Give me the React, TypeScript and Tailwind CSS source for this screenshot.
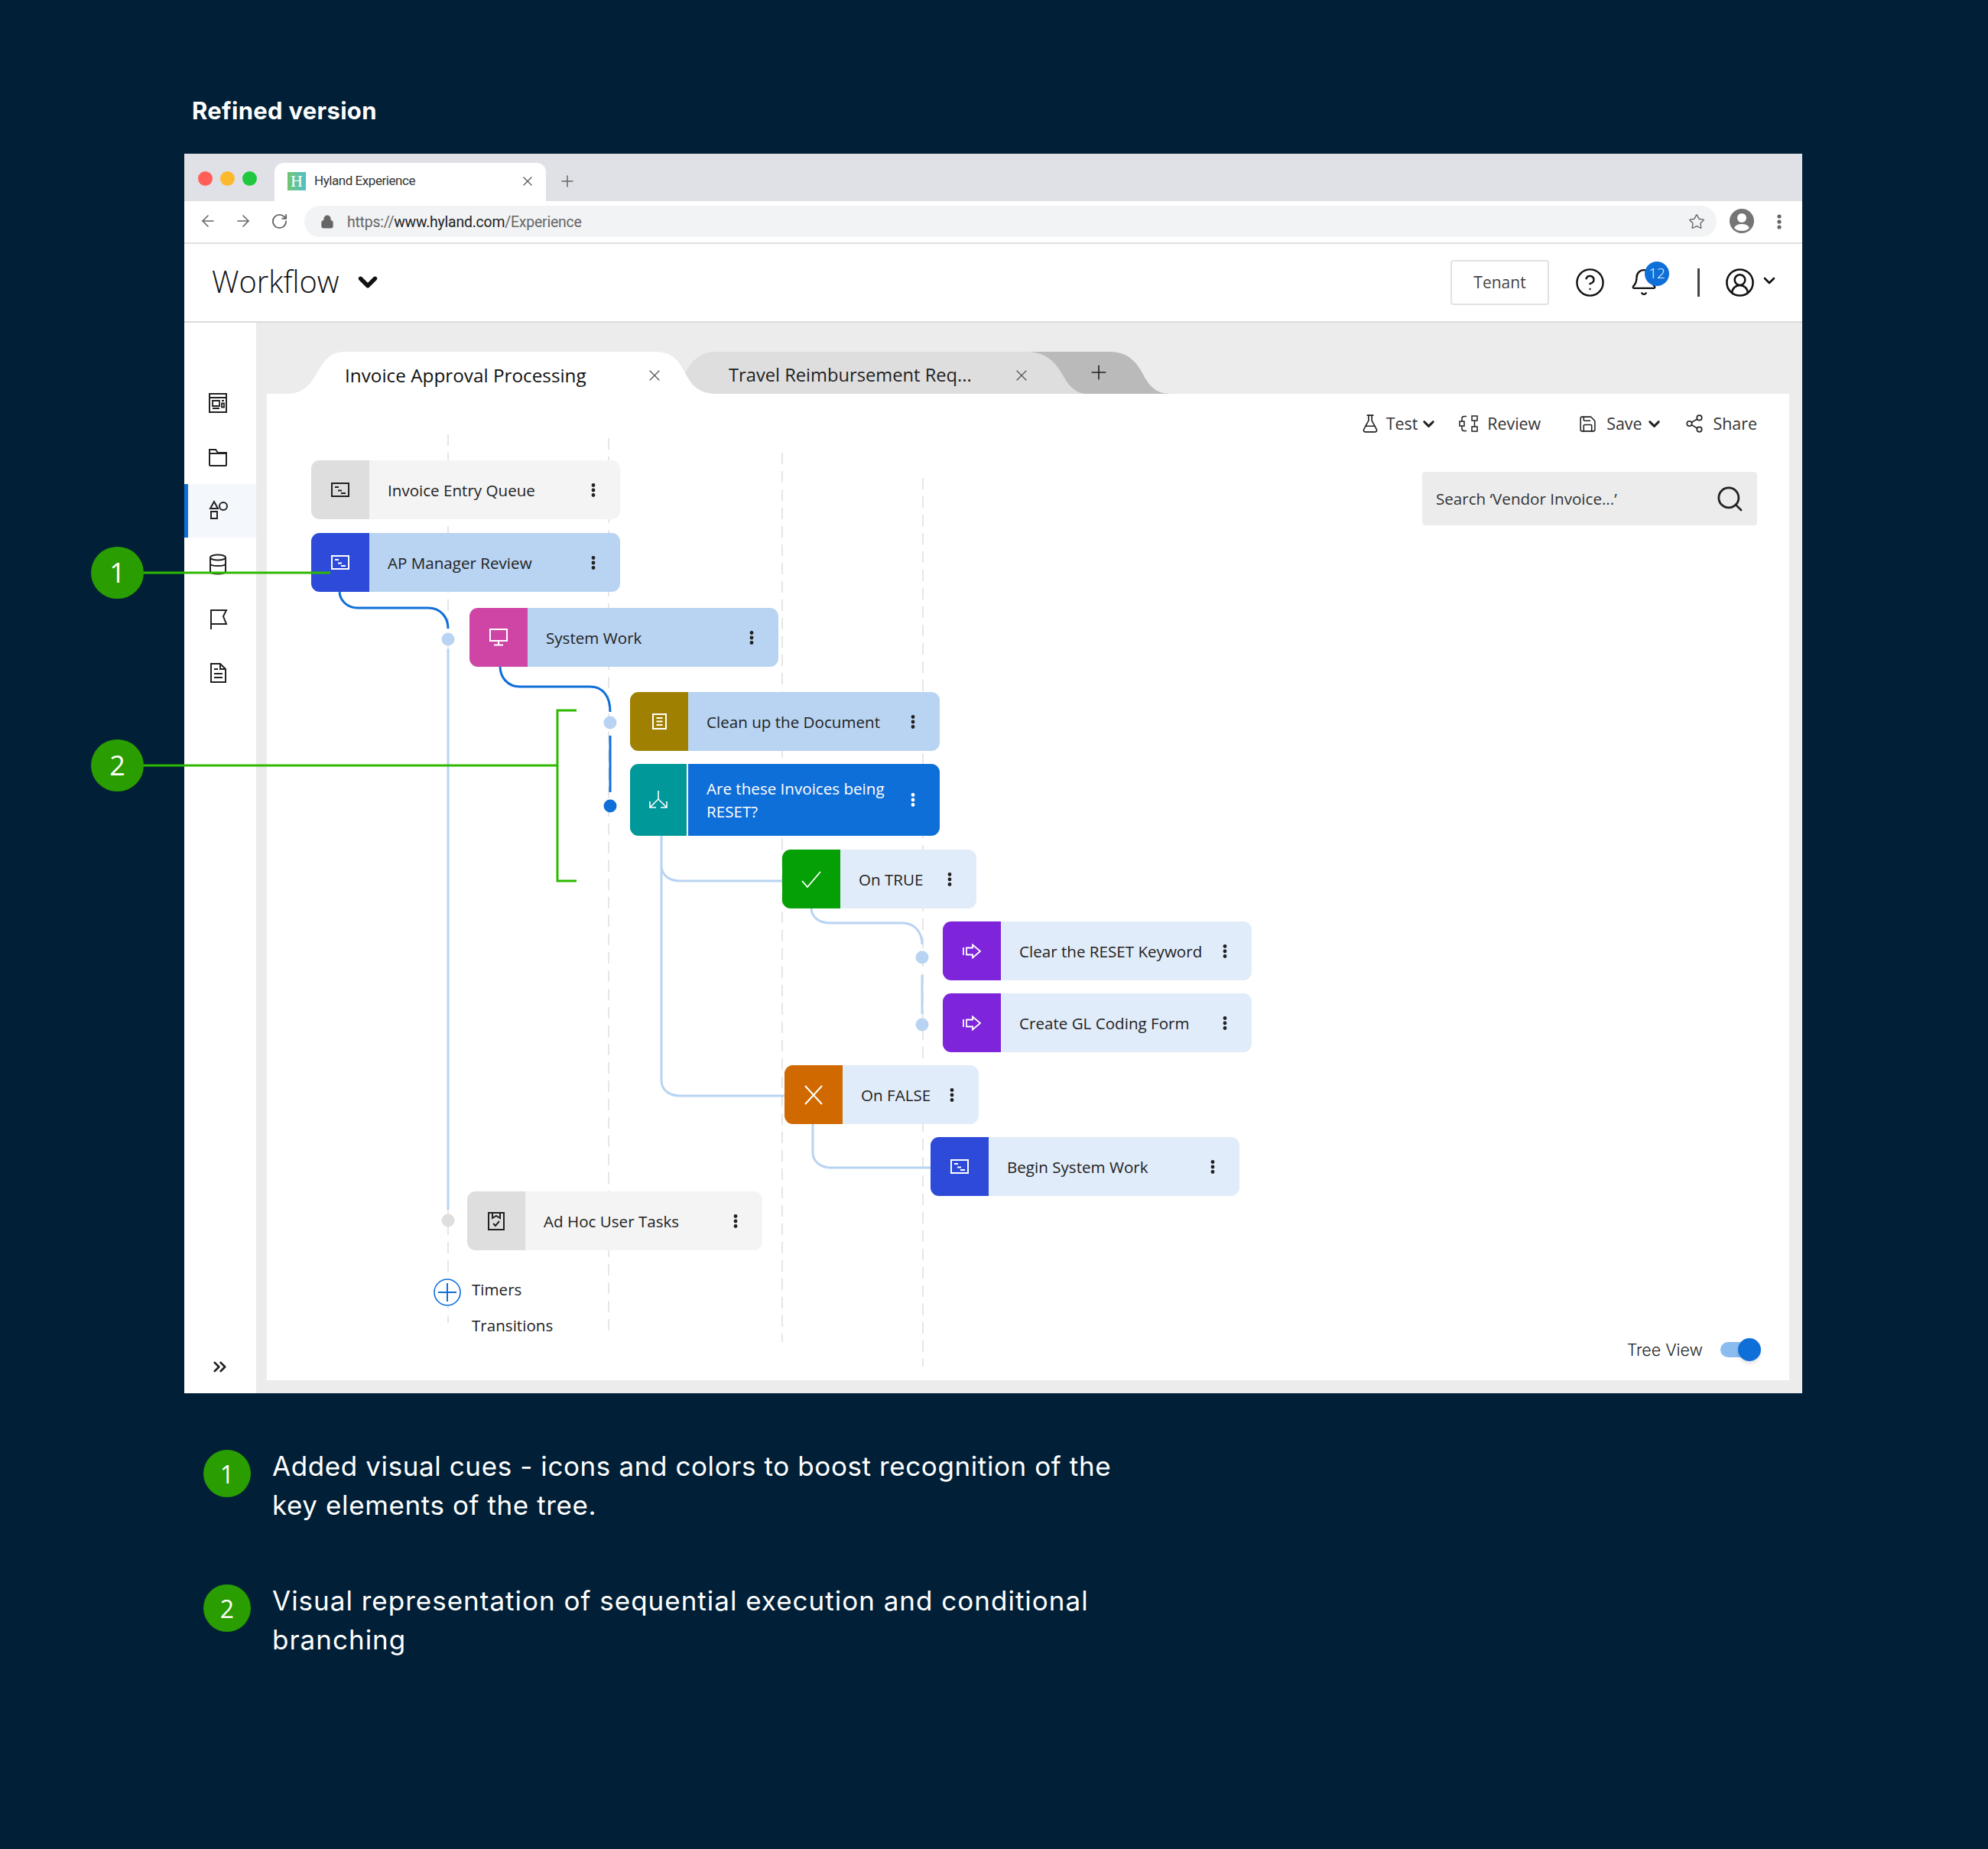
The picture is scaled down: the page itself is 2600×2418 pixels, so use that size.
import React from "react";
import { ArrowLeft, ArrowRight, RotateCw, Star, Lock, Search, X, Plus, ChevronDown, ChevronsRight, Share2, Save, CircleHelp, Bell, CircleUserRound, FlaskConical } from "lucide-react";

const OPEN = "font-['Open_Sans',sans-serif]";

function Queue({ c }: { c: string }) {
  return (
    <svg width="24" height="19" viewBox="0 0 24 19" fill="none" stroke={c} strokeWidth="2">
      <rect x="1" y="1" width="22" height="17" />
      <path d="M5 6h5M9 10.500h5M13 14h6" />
    </svg>
  );
}
function Monitor() {
  return (
    <svg width="24" height="23" viewBox="0 0 24 23" fill="none" stroke="#fff" strokeWidth="2">
      <rect x="1" y="1" width="22" height="15" />
      <path d="M12 16v5M6 21.500h12" />
    </svg>
  );
}
function Doc() {
  return (
    <svg width="19" height="21" viewBox="0 0 19 21" fill="none" stroke="#fff" strokeWidth="2">
      <rect x="1" y="1" width="17" height="19" />
      <path d="M5.500 6h8M5.500 10.500h8M5.500 15h8" />
    </svg>
  );
}
function Branch() {
  return (
    <svg width="26" height="24" viewBox="0 0 26 24" fill="none" stroke="#fff" strokeWidth="1.600">
      <path d="M13 0v11L2 22M13 11l11 11M2 14v8h8M24 14v8h-8" />
    </svg>
  );
}
function Check() {
  return (
    <svg width="26" height="22" viewBox="0 0 26 22" fill="none" stroke="#fff" strokeWidth="1.800">
      <path d="M1 13l7 8L25 1" />
    </svg>
  );
}
function Cross() {
  return (
    <svg width="26" height="26" viewBox="0 0 26 26" fill="none" stroke="#fff" strokeWidth="2">
      <path d="M2 1l22 24M24 1L2 25" />
    </svg>
  );
}
function Go() {
  return (
    <svg width="25" height="20" viewBox="0 0 25 20" fill="none" stroke="#fff" strokeWidth="1.800">
      <path d="M1 5v10M5 5.500h8V1.500L23 10l-10 8.500V14.500H5z" />
    </svg>
  );
}
function Clip() {
  return (
    <svg width="22" height="25" viewBox="0 0 22 25" fill="none" stroke="#222" strokeWidth="2">
      <rect x="1" y="2" width="20" height="22" />
      <path d="M6 2v7l5-3 5 3V2M7 16l3 3 5-6" />
    </svg>
  );
}
function Dots({ c }: { c: string }) {
  return (
    <svg width="6" height="18" viewBox="0 0 6 18" fill={c} className="shrink-0">
      <circle cx="3" cy="2.500" r="2.400" />
      <circle cx="3" cy="9" r="2.400" />
      <circle cx="3" cy="15.500" r="2.400" />
    </svg>
  );
}

type N = { pos: string; block: string; body: string; label: React.ReactNode; icon: React.ReactNode; dots?: string; text?: string; sep?: boolean };
const nodes: N[] = [
  { pos: "left-[58px] top-[87px] w-[404px] h-[77px]", block: "bg-[#dedede]", body: "bg-[#f4f4f4]", label: "Invoice Entry Queue", icon: <Queue c="#222" /> },
  { pos: "left-[58px] top-[182px] w-[404px] h-[77px]", block: "bg-[#2d4bd8]", body: "bg-[#b8d4f2]", label: "AP Manager Review", icon: <Queue c="#fff" /> },
  { pos: "left-[265px] top-[280px] w-[404px] h-[77px]", block: "bg-[#cf45a6]", body: "bg-[#b8d4f2]", label: "System Work", icon: <Monitor /> },
  { pos: "left-[475px] top-[390px] w-[405px] h-[77px]", block: "bg-[#a08000]", body: "bg-[#b8d4f2]", label: "Clean up the Document", icon: <Doc /> },
  { pos: "left-[475px] top-[484px] w-[405px] h-[94px]", block: "bg-[#009899]", body: "bg-[#0f6fd8]", label: <>Are these Invoices being<br />RESET?</>, icon: <Branch />, dots: "#fff", text: "text-white", sep: true },
  { pos: "left-[674px] top-[596px] w-[254px] h-[77px]", block: "bg-[#05a005]", body: "bg-[#e1ecfa]", label: "On TRUE", icon: <Check /> },
  { pos: "left-[884px] top-[690px] w-[404px] h-[77px]", block: "bg-[#7e25db]", body: "bg-[#e1ecfa]", label: "Clear the RESET Keyword", icon: <Go /> },
  { pos: "left-[884px] top-[784px] w-[404px] h-[77px]", block: "bg-[#7e25db]", body: "bg-[#e1ecfa]", label: "Create GL Coding Form", icon: <Go /> },
  { pos: "left-[677px] top-[878px] w-[254px] h-[77px]", block: "bg-[#d06a00]", body: "bg-[#e1ecfa]", label: "On FALSE", icon: <Cross /> },
  { pos: "left-[868px] top-[972px] w-[404px] h-[77px]", block: "bg-[#2d4bd8]", body: "bg-[#e1ecfa]", label: "Begin System Work", icon: <Queue c="#fff" /> },
  { pos: "left-[262px] top-[1043px] w-[386px] h-[77px]", block: "bg-[#dedede]", body: "bg-[#f4f4f4]", label: "Ad Hoc User Tasks", icon: <Clip /> },
];

function Node({ n }: { n: N }) {
  return (
    <div className={`absolute flex overflow-hidden rounded-[11px] ${n.pos}`}>
      <div className={`flex w-[76px] shrink-0 items-center justify-center ${n.block} ${n.sep ? "border-r-2 border-white" : ""}`}>{n.icon}</div>
      <div className={`flex flex-1 items-center justify-between pl-[24px] pr-[32px] text-[20.6px] leading-[30px] ${n.body} ${n.text ?? "text-[#222]"}`}>
        <span>{n.label}</span>
        <Dots c={n.dots ?? "#222"} />
      </div>
    </div>
  );
}

function Diagram() {
  const light = "#b8d4f2";
  const blue = "#0f6fd8";
  return (
    <div className="absolute inset-0">
      <svg className="absolute inset-0" width="1991" height="1290" viewBox="349 515 1991 1290" fill="none">
        <g stroke="#e6e6e6" strokeWidth="2" strokeDasharray="15 9">
          <path d="M586 568V1730M796 573V1740M1023 592V1755M1207 625V1787" />
        </g>
        <g strokeWidth="3">
          <path stroke={blue} d="M444 773c0 12 10 22 24 22H560c16 0 26 12 26 27" />
          <path stroke={blue} d="M654 871c0 15 10 27 26 27H772c16 0 26 12 26 33M798 962V1036" />
          <path stroke={light} d="M586 848V1582" />
          <path stroke={light} d="M865 1093V1132c0 12 10 20 24 20h134M865 1132V1413c0 12 10 20 24 20h137" />
          <path stroke={light} d="M1061 1187c0 12 10 20 24 20H1180c16 0 26 12 26 28M1206 1275V1326" />
          <path stroke={light} d="M1063 1469v38c0 12 10 20 24 20h130" />
        </g>
        <circle cx="586" cy="836" r="8.500" fill={light} />
        <circle cx="798" cy="945" r="8.500" fill={light} />
        <circle cx="798" cy="1054" r="8.500" fill={blue} />
        <circle cx="1206" cy="1252" r="8.500" fill={light} />
        <circle cx="1206" cy="1340" r="8.500" fill={light} />
        <circle cx="586" cy="1596" r="8.500" fill="#dedede" />
        <circle cx="585" cy="1690" r="17" fill="#fff" stroke={blue} strokeWidth="1.600" />
        <path d="M573 1690h24M585 1678v24" stroke={blue} strokeWidth="2" />
      </svg>
      {nodes.map((n, i) => (
        <Node key={i} n={n} />
      ))}
      <span className="absolute left-[268px] top-[1156px] text-[20.6px] leading-[30px] text-[#222]">Timers</span>
      <span className="absolute left-[268px] top-[1203px] text-[20.6px] leading-[30px] text-[#222]">Transitions</span>
    </div>
  );
}

function SideIcon({ d, active, cls }: { d: React.ReactNode; active?: boolean; cls: string }) {
  return (
    <div className={`flex w-full items-center justify-center ${cls} ${active ? "border-l-[5px] border-[#0f6fd8] bg-[#f4f8fd] pr-[9px]" : "pr-[7px]"}`}>
      <svg width="26" height="28" viewBox="0 0 26 28" fill="none" stroke="#222" strokeWidth="2">
        {d}
      </svg>
    </div>
  );
}

function Sidebar() {
  return (
    <div className="flex w-[94px] shrink-0 flex-col bg-white">
      <div className="h-[84px]" />
      <SideIcon cls="h-[42px]" d={<><rect x="2" y="2" width="22" height="24" /><path d="M2 7h22M6 11h9v7H6zM18 11h3M18 14.500h3v5h-3zM6 21h9" strokeWidth="1.800" /></>} />
      <div className="h-[29px]" />
      <SideIcon cls="h-[42px]" d={<path d="M2 4h8l3 4h11v16a1 1 0 0 1-1 1H3a1 1 0 0 1-1-1zM2 9h22" />} />
      <div className="h-[14px]" />
      <SideIcon active cls="h-[70px]" d={<><path d="M7 2l5 9H2zM3 15h8v9H3z" /><circle cx="19" cy="8" r="5" /></>} />
      <div className="h-[14px]" />
      <SideIcon cls="h-[42px]" d={<><ellipse cx="13" cy="5" rx="10" ry="3.500" /><path d="M3 5v18c0 2 4 3.500 10 3.500s10-1.500 10-3.500V5M3 13c0 2 4 3 10 3s10-1 10-3" /></>} />
      <div className="h-[30px]" />
      <SideIcon cls="h-[42px]" d={<path d="M4 27V2h20l-4 8 4 10H4" />} />
      <div className="h-[28px]" />
      <SideIcon cls="h-[42px]" d={<path d="M4 2h12l7 7v17H4zM16 2v7h7M8 9h5M8 15h11M8 20h11" />} />
      <div className="mt-auto flex h-[48px] items-start justify-center pr-[1px]">
        <ChevronsRight size={27} strokeWidth={2.400} color="#222" />
      </div>
    </div>
  );
}

function Tabs() {
  return (
    <div className="relative h-[93px]">
      <svg className="absolute left-[-14px] top-0" width="1300" height="93" viewBox="335 422 1300 93">
        <path fill="#bababa" d="M1300 460H1452C1480 460 1490 480 1498 495 1507 510 1517 515 1531 515H1300Z" />
        <path fill="#dedede" d="M936 460H1344C1372 460 1384 480 1392 494 1400 508 1410 515 1420 515H936C915 515 905 505 896 488 905 472 915 460 936 460Z" />
        <path fill="#fff" d="M349 515H375C395 515 405 505 415 487 425 470 432 460 452 460H857C880 460 888 472 896 488 905 505 915 515 936 515Z" />
      </svg>
      <div className="relative flex h-full items-center pt-[45px]">
        <div className="flex w-[530px] shrink-0 items-center">
          <span className="ml-[102px] text-[24.3px] font-medium whitespace-nowrap text-[#111]">Invoice Approval Processing</span>
          <X size={24} strokeWidth={1.200} color="#555" className="ml-[77px] shrink-0" />
        </div>
        <div className="ml-[74px] flex items-center">
          <span className="text-[23.700px] whitespace-nowrap text-[#222]">Travel Reimbursement Req...</span>
          <X size={24} strokeWidth={1.200} color="#555" className="ml-[53px] shrink-0" />
          <Plus size={30} strokeWidth={1.300} color="#222" className="ml-[74px] mt-[-8px] shrink-0" />
        </div>
      </div>
    </div>
  );
}

function Toolbar() {
  return (
    <div className="relative flex items-center justify-end pr-[42px] pt-[23px] text-[21.4px] font-medium text-[#333]">
      <FlaskConical size={26} strokeWidth={1.500} color="#222" />
      <span className="ml-[8px]">Test</span>
      <ChevronDown size={23} strokeWidth={3} color="#222" className="ml-[3px]" />
      <svg className="ml-[28px]" width="26" height="24" viewBox="0 0 26 24" fill="none" stroke="#222" strokeWidth="1.500">
        <path d="M17 2h7v6h-7zM17 16h7v6h-7zM1 9h6v6H1zM4 9V5c0-2 1-2.500 3-2.500h3M4 15v4c0 2 1 2.500 3 2.500h3M20.500 8v8" />
      </svg>
      <span className="ml-[11px]">Review</span>
      <Save size={25} strokeWidth={1.500} color="#222" className="ml-[49px]" />
      <span className="ml-[12px]">Save</span>
      <ChevronDown size={23} strokeWidth={3} color="#222" className="ml-[4px]" />
      <Share2 size={26} strokeWidth={1.500} color="#222" className="ml-[28px]" />
      <span className="ml-[12px]">Share</span>
    </div>
  );
}

export default function App() {
  return (
    <div className={`relative h-[2418px] w-[2600px] overflow-hidden bg-[#012037] ${OPEN}`}>
      <h1 className="pl-[251px] pt-[127px] font-['Inter',sans-serif] text-[31px] font-bold leading-[36px] tracking-[0.3px] text-white">Refined version</h1>

      <div className="ml-[241px] mt-[38px] flex h-[1621px] w-[2116px] flex-col bg-white">
        {/* browser tab strip */}
        <div className="flex h-[62px] shrink-0 items-end bg-[#dfe1e6]">
          <div className="ml-[17px] flex w-[101px] items-center gap-[10px] self-start pt-[23px] pl-[1px]">
            <span className="h-[19px] w-[19px] rounded-full bg-[#ff5f57]" />
            <span className="h-[19px] w-[19px] rounded-full bg-[#fdb92e]" />
            <span className="h-[19px] w-[19px] rounded-full bg-[#21c83f]" />
          </div>
          <div className="flex h-[50px] w-[355px] items-center rounded-t-[12px] bg-white pb-[2px] pl-[17px] font-['Roboto',sans-serif]">
            <span className="flex h-[24px] w-[24px] items-center justify-center bg-linear-to-r from-[#74c46f] to-[#4fbfc9] font-['Liberation_Serif',serif] text-[22px] leading-none text-white">H</span>
            <span className="ml-[11px] text-[17px] tracking-[-0.45px] text-[#333]">Hyland Experience</span>
            <X size={20} strokeWidth={1.500} color="#555" className="ml-[137px]" />
          </div>
          <Plus size={24} strokeWidth={1.500} color="#666" className="mb-[14px] ml-[16px]" />
        </div>
        {/* address row */}
        <div className="flex h-[56px] shrink-0 items-start border-b-2 border-[#e0e0e0] bg-white">
          <div className="flex h-[52px] items-center pl-[19px]">
            <ArrowLeft size={24} strokeWidth={1.600} color="#666" />
            <ArrowRight size={24} strokeWidth={1.600} color="#666" className="ml-[22px]" />
            <RotateCw size={23} strokeWidth={2} color="#666" className="ml-[24px]" />
          </div>
          <div className="ml-[21px] mt-[6px] flex h-[41px] w-[1847px] items-center rounded-full bg-[#f1f3f4] pl-[21px] pr-[15px] font-['Roboto',sans-serif] text-[19.4px] tracking-[-0.2px] text-[#666]">
            <Lock size={18} fill="#666" strokeWidth={2.400} color="#666" />
            <span className="ml-[17px] pt-[3px]">https://<span className="text-[#222]">www.hyland.com</span>/Experience</span>
            <Star size={22} strokeWidth={1.500} color="#666" className="ml-auto" />
          </div>
          <div className="ml-[17px] mt-[10px] flex h-[32px] w-[32px] items-center justify-center overflow-hidden rounded-full bg-[#757575]">
            <svg width="32" height="32" viewBox="0 0 32 32" fill="#fff">
              <circle cx="16" cy="12" r="6" />
              <path d="M6 25c2-4 6-5 10-5s8 1 10 5c-3 3-6 4-10 4s-7-1-10-4z" />
            </svg>
          </div>
          <svg className="ml-[30px] mt-[17px]" width="6" height="20" viewBox="0 0 6 20" fill="#666">
            <circle cx="3" cy="3" r="2.600" /><circle cx="3" cy="10" r="2.600" /><circle cx="3" cy="17" r="2.600" />
          </svg>
        </div>
        {/* app header */}
        <div className="flex h-[103px] shrink-0 items-center border-b-2 border-[#dcdcdc] pl-[36px] pr-[31px]">
          <span className="mt-[-4px] text-[39.800px] font-light text-[#111]">Workflow</span>
          <ChevronDown size={38} strokeWidth={3.400} color="#111" className="ml-[18px] mt-[-2px]" />
          <button className="ml-auto flex h-[59px] w-[129px] items-center justify-center rounded-[4px] border-2 border-[#e2e2e2] text-[21px] font-medium text-[#444]">Tenant</button>
          <CircleHelp size={41} strokeWidth={1.400} color="#111" className="ml-[33px]" />
          <div className="relative ml-[31px] h-[40px] w-[40px]">
            <Bell size={38} strokeWidth={1.500} color="#111" />
            <span className="absolute left-[20px] top-[-8px] flex h-[32px] w-[32px] items-center justify-center rounded-full bg-[#0f6fd8] text-[19px] font-light text-white">12</span>
          </div>
          <span className="ml-[49px] h-[37px] w-[3px] bg-[#444]" />
          <CircleUserRound size={41} strokeWidth={1.500} color="#111" className="ml-[32px]" />
          <ChevronDown size={24} strokeWidth={2.600} color="#111" className="ml-[6px] mt-[-6px]" />
        </div>
        {/* body */}
        <div className="flex min-h-0 flex-1">
          <Sidebar />
          <div className="flex flex-1 flex-col bg-[#ececec] pb-[17px] pl-[14px] pr-[17px]">
            <Tabs />
            <div className="relative flex flex-1 flex-col bg-white">
              <Diagram />
              <Toolbar />
              <div className="relative mr-[42px] mt-[47px] flex h-[70px] w-[438px] items-center justify-between self-end rounded-[4px] bg-[#ececec] pl-[18px] pr-[16px] text-[20.6px] text-[#333]">
                <span>Search ‘Vendor Invoice...’</span>
                <Search size={39} strokeWidth={1.700} color="#222" />
              </div>
              <div className="relative mt-auto flex items-center justify-end pb-[24px] pr-[37px]">
                <span className="font-['Inter',sans-serif] text-[21.4px] font-light text-[#222]">Tree View</span>
                <div className="relative ml-[23px] h-[20px] w-[40px] rounded-full bg-[#8bbcef]">
                  <span className="absolute left-[23px] top-[-5px] h-[30px] w-[30px] rounded-full bg-[#0f6fd8] shadow-md" />
                </div>
                <span className="w-[13px]" />
              </div>
            </div>
          </div>
        </div>
      </div>

      {/* footer notes */}
      <div className="mt-[70px] flex flex-col gap-[74px] pl-[266px] font-['Inter',sans-serif] text-[35px] leading-[51px] text-white">
        <div className="flex gap-[28px]">
          <span className={`mt-[4px] flex h-[62px] w-[62px] shrink-0 items-center justify-center rounded-full bg-[#2a9d00] text-[32px] font-medium tracking-normal ${OPEN}`}>1</span>
          <p className="w-[1150px] tracking-[0.6px]">Added visual cues - icons and colors to boost recognition of the<br />key elements of the tree.</p>
        </div>
        <div className="flex gap-[28px]">
          <span className={`mt-[4px] flex h-[62px] w-[62px] shrink-0 items-center justify-center rounded-full bg-[#2a9d00] text-[32px] font-medium tracking-normal ${OPEN}`}>2</span>
          <p className="w-[1150px] tracking-[1px]">Visual representation of sequential execution and conditional<br />branching</p>
        </div>
      </div>

      {/* callouts over the screenshot */}
      <svg className="pointer-events-none absolute inset-0" width="2600" height="2418" viewBox="0 0 2600 2418" fill="none" stroke="#2fb900" strokeWidth="3">
        <path d="M185 749H432M185 1001H729M754 929H729V1152H754" />
      </svg>
      <span className="absolute left-[119px] top-[715px] flex h-[68px] w-[69px] items-center justify-center rounded-full bg-[#2a9d00] text-[36px] font-medium text-white">1</span>
      <span className="absolute left-[119px] top-[967px] flex h-[68px] w-[69px] items-center justify-center rounded-full bg-[#2a9d00] text-[36px] font-medium text-white">2</span>
    </div>
  );
}
